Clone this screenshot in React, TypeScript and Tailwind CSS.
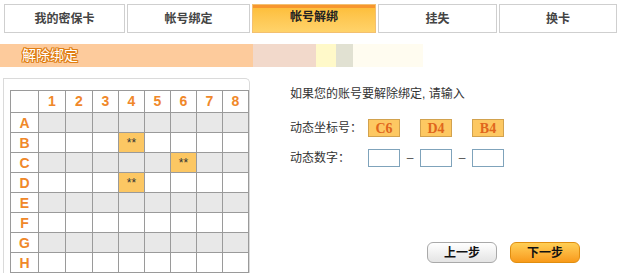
import React from 'react'

const tabs = [
  { label: '我的密保卡', w: 'w-[121px]' },
  { label: '帐号绑定', w: 'w-[123px]' },
  { label: '帐号解绑', w: 'w-[124px]', active: true },
  { label: '挂失', w: 'w-[119px]' },
  { label: '换卡', w: 'w-[118px]' },
]

const cols = ['1', '2', '3', '4', '5', '6', '7', '8']
const rows = ['A', 'B', 'C', 'D', 'E', 'F', 'G', 'H']
const marked: Record<string, boolean> = { B4: true, C6: true, D4: true }

const font = { fontFamily: '"Liberation Sans", "Noto Sans CJK SC", sans-serif' }

function Grid() {
  return (
    <table className="border-collapse table-fixed text-[12px]">
      <colgroup>
        <col className="w-[28px]" />
        <col className="w-[27px]" />
        <col className="w-[27px]" />
        {cols.slice(2).map((c) => (
          <col key={c} className="w-[26px]" />
        ))}
      </colgroup>
      <thead>
        <tr className="h-[20px]">
          <th className="border border-[#9a9a9a] bg-white" />
          {cols.map((c) => (
            <th key={c} className="border border-[#9a9a9a] bg-white p-0 text-center text-[14px] font-bold text-[#f0882a]">
              {c}
            </th>
          ))}
        </tr>
      </thead>
      <tbody>
        {rows.map((r, i) => (
          <tr key={r} className="h-[20px]">
            <td className="border border-[#9a9a9a] bg-white p-0 text-center text-[14px] font-bold leading-none text-[#f0882a]">{r}</td>
            {cols.map((c) => {
              const hit = marked[r + c]
              return (
                <td
                  key={c}
                  className={
                    'border border-[#9a9a9a] p-0 text-center text-[12px] leading-none text-[#333] ' +
                    (hit ? 'bg-[#fcc763]' : i % 2 === 0 ? 'bg-[#e8e8e8]' : 'bg-white')
                  }
                >
                  {hit ? '**' : ''}
                </td>
              )
            })}
          </tr>
        ))}
        <tr className="h-[20px]">
          <td className="border border-[#9a9a9a] bg-white" />
          {cols.map((c) => (
            <td key={c} className="border border-[#9a9a9a] bg-[#e8e8e8]" />
          ))}
        </tr>
      </tbody>
    </table>
  )
}

export default function App() {
  return (
    <div className="h-[273px] w-[619px] overflow-hidden bg-white text-[12px] text-[#333]" style={font}>
      {/* tabs */}
      <div className="flex gap-[2px] pl-[4px] pt-[4px]">
        {tabs.map((t) =>
          t.active ? (
            <div
              key={t.label}
              className={`${t.w} flex h-[29px] flex-col overflow-hidden border border-[#f3c070]`}
            >
              <div className="h-[10px] bg-[#f7962e]" />
              <div className="flex flex-1 items-center justify-center bg-gradient-to-b from-[#fdbf3c] to-[#ffd36a] pb-[6px] text-[12px] font-bold text-[#222]">
                {t.label}
              </div>
            </div>
          ) : (
            <div
              key={t.label}
              className={`${t.w} flex h-[29px] items-center justify-center border border-[#cfcfcf] bg-white text-[12px] font-bold text-[#444]`}
            >
              {t.label}
            </div>
          ),
        )}
      </div>

      {/* banner */}
      <div className="mt-[11px] flex h-[23px]">
        <div className="flex w-[253px] items-center bg-[#fdcb9c] pl-[22px]">
          <span
            className="text-[14px] text-white"
            style={{
              textShadow:
                '1px 0 #e07e12, -1px 0 #e07e12, 0 1px #e07e12, 0 -1px #e07e12, 1px 1px #e07e12, -1px -1px #e07e12, 1px -1px #e07e12, -1px 1px #e07e12',
            }}
          >
            解除绑定
          </span>
        </div>
        <div className="w-[63px] bg-[#f2d9cb]" />
        <div className="w-[20px] bg-[#fff9c9]" />
        <div className="w-[17px] bg-[#e1e1d2]" />
        <div className="w-[70px] bg-[#fffcf0]" />
      </div>

      {/* body */}
      <div className="mt-[11px] flex">
        <div className="ml-[3px] w-[247px] rounded-tr-[5px] border border-b-0 border-[#dadada] pl-[6px] pt-[11px]">
          <Grid />
        </div>

        <div className="ml-[40px] flex flex-col pt-[8px]">
          <div className="leading-[16px]">如果您的账号要解除绑定, 请输入</div>

          <div className="mt-[17px] flex h-[18px] items-center">
            <span className="w-[78px]">动态坐标号：</span>
            {['C6', 'D4', 'B4'].map((v, i) => (
              <div
                key={v}
                className={
                  'flex h-[18px] w-[32px] items-center justify-center border border-[#d2a24e] bg-[#fdc862] text-[14px] font-bold text-[#e0651c] ' +
                  (i > 0 ? 'ml-[20px]' : '')
                }
                style={{ fontFamily: '"Liberation Serif", serif' }}
              >
                {v}
              </div>
            ))}
          </div>

          <div className="mt-[12px] flex h-[18px] items-center">
            <span className="w-[78px]">动态数字：</span>
            {[0, 1, 2].map((i) => (
              <React.Fragment key={i}>
                {i > 0 && <span className="w-[20px] text-center text-[#555]">–</span>}
                <input className="h-[18px] w-[32px] border border-[#7fa3bb] bg-white outline-none" />
              </React.Fragment>
            ))}
          </div>

          <div className="ml-[137px] mt-[75px] flex gap-[13px]">
            <button className="h-[21px] w-[70px] rounded-[6px] border border-[#a9a9a9] bg-gradient-to-b from-white to-[#e4e4e4] text-[12px] font-bold text-[#111]">
              上一步
            </button>
            <button className="h-[21px] w-[70px] rounded-[6px] border border-[#e08e10] bg-gradient-to-b from-[#ffcf55] to-[#f89a18] text-[12px] font-bold text-[#111]">
              下一步
            </button>
          </div>
        </div>
      </div>
    </div>
  )
}
